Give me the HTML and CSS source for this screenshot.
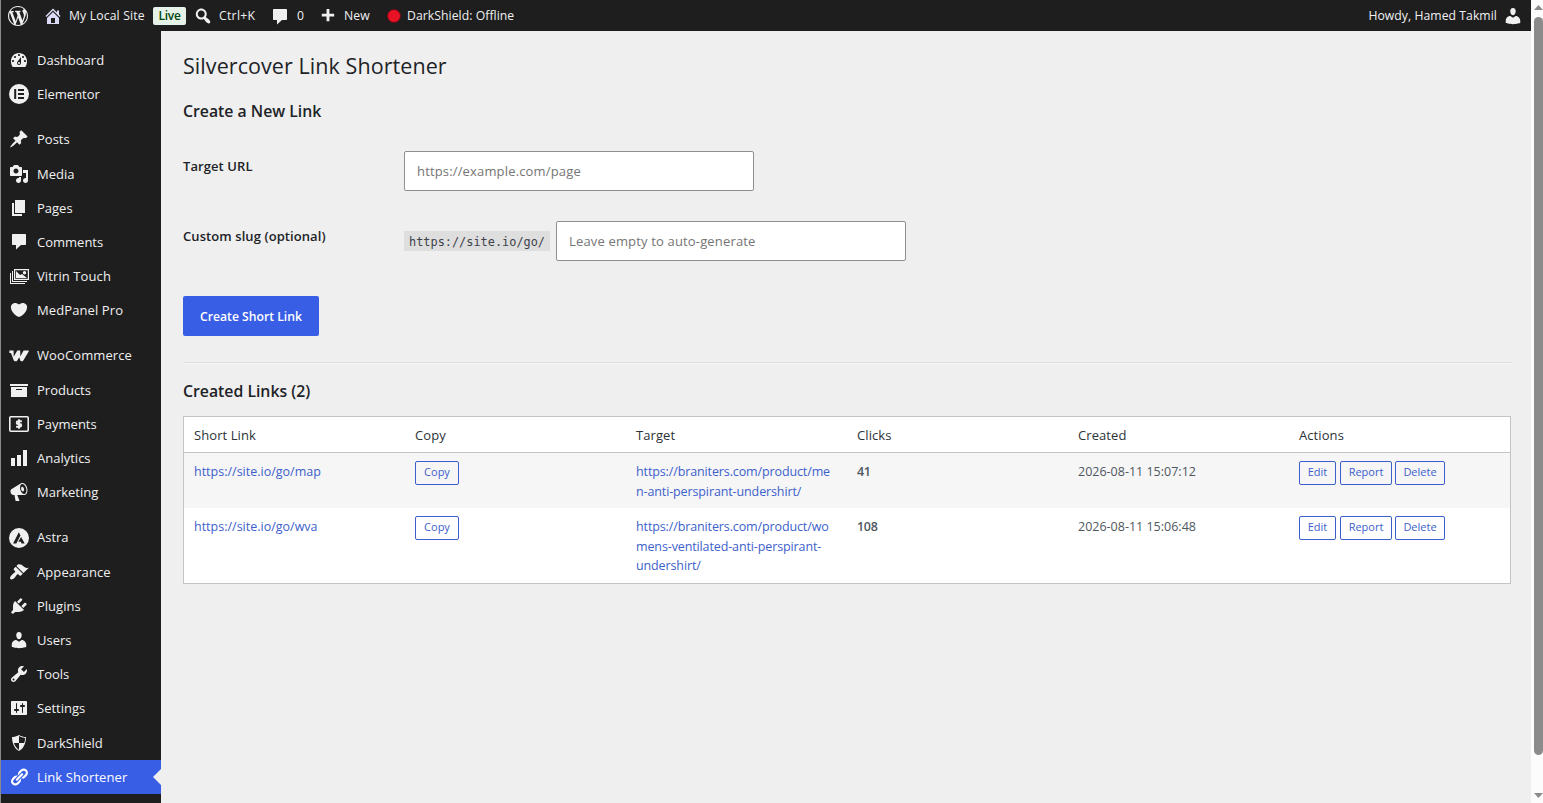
FILE: index.html
```html
<!DOCTYPE html>
<html lang="en">
<head>
<meta charset="utf-8">
<title>Silvercover Link Shortener</title>
<link rel="stylesheet" href="styles.css">
</head>
<body>
<div class="screen">
<div class="admin">
  <header class="adminbar">
    <svg class="icon wp" viewBox="0 0 20 20"><path d="M20 10c0-5.51-4.49-10-10-10C4.48 0 0 4.49 0 10c0 5.52 4.48 10 10 10 5.51 0 10-4.48 10-10zM7.78 15.37L4.37 6.22c.55-.02 1.17-.08 1.17-.08.5-.06.44-1.13-.06-1.11 0 0-1.45.11-2.37.11-.18 0-.37 0-.58-.01C4.12 2.69 6.87 1.11 10 1.11c2.33 0 4.45.87 6.05 2.34-.68-.11-1.65.39-1.65 1.58 0 .74.45 1.36.9 2.1.35.61.55 1.36.55 2.46 0 1.49-1.4 5-1.4 5l-3.03-8.37c.54-.02.82-.17.82-.17.5-.05.44-1.25-.06-1.22 0 0-1.44.12-2.38.12-.87 0-2.33-.12-2.33-.12-.5-.03-.56 1.2-.06 1.22l.92.08 1.26 3.41zM17.41 10c.24-.64.74-1.87.43-4.25.7 1.29 1.05 2.71 1.05 4.25 0 3.29-1.73 6.24-4.4 7.78.97-2.59 1.94-5.2 2.92-7.78zM6.1 18.09C3.12 16.65 1.11 13.53 1.11 10c0-1.3.23-2.48.72-3.59C3.25 10.3 4.67 14.2 6.1 18.09zm4.03-6.63l2.58 6.98c-.86.29-1.76.45-2.71.45-.79 0-1.57-.11-2.29-.33.81-2.38 1.62-4.74 2.42-7.1z"/></svg>
    <a class="bar-item site"><svg class="icon home" viewBox="0 0 20 20"><path d="M16 8.5l1.53 1.53-1.06 1.06L10 4.6l-6.47 6.49-1.06-1.06L10 2.5l4 4v-2h2v4zm-6-2.46l6 5.99V18H4v-5.97zM12 17v-5H8v5h4z"/></svg><span>My Local Site</span></a>
    <span class="live">Live</span>
    <a class="bar-item search"><svg class="icon" viewBox="0 0 20 20"><path d="M12.14 4.18c1.87 1.87 2.11 4.75.72 6.89.12.1.22.21.36.31.2.16.47.36.81.59.34.24.56.39.66.47.42.31.73.57.94.78.32.32.6.65.84 1 .25.35.44.69.59 1.04.14.35.21.68.18 1-.02.32-.14.59-.36.81s-.49.34-.81.36c-.31.02-.65-.04-.99-.19-.35-.14-.7-.34-1.04-.59-.35-.24-.68-.52-1-.84-.21-.21-.47-.52-.77-.93-.1-.13-.25-.35-.47-.66-.22-.32-.4-.57-.56-.78-.16-.2-.29-.35-.44-.5-2.07 1.09-4.69.76-6.44-.98-2.14-2.15-2.14-5.64 0-7.78 2.15-2.15 5.63-2.15 7.78 0zm-1.41 6.36c1.36-1.37 1.36-3.58 0-4.95-1.37-1.37-3.59-1.37-4.95 0-1.37 1.37-1.37 3.58 0 4.95 1.36 1.37 3.58 1.37 4.95 0z"/></svg><span>Ctrl+K</span></a>
    <a class="bar-item comments"><svg class="icon" viewBox="0 0 20 20"><path d="M4 2h12c.6 0 1 .4 1 1v9c0 .6-.4 1-1 1h-4l-5 4.500V13H4c-.6 0-1-.4-1-1V3c0-.6.4-1 1-1z"/></svg><span>0</span></a>
    <a class="bar-item new"><svg class="icon" viewBox="0 0 20 20"><path d="M17 7v3h-5v5H9v-5H4V7h5V2h3v5h5z"/></svg><span>New</span></a>
    <a class="bar-item shield"><i class="dot"></i><span>DarkShield: Offline</span></a>
    <a class="bar-item user"><span>Howdy, Hamed Takmil</span><svg class="icon" viewBox="0 0 20 20"><path d="M10 9.25c-2.27 0-2.73-3.44-2.73-3.44C7 4.02 7.82 2 9.97 2c2.16 0 2.98 2.02 2.71 3.81 0 0-.41 3.44-2.68 3.44zm0 2.57L12.72 10c2.39 0 4.52 2.33 4.52 4.53v2.49s-3.65 1.13-7.24 1.13c-3.65 0-7.24-1.13-7.24-1.13v-2.49c0-2.25 1.94-4.48 4.47-4.48z"/></svg></a>
  </header>
  <div class="body">
    <nav class="menu">
      <a class="item"><svg class="icon" viewBox="0 0 20 20"><path d="M3.76 17h12.48c1.34-1.63 1.76-3.73 1.76-6 0-4.42-3.58-8-8-8s-8 3.58-8 8c0 2.27.42 4.37 1.76 6zM10 4c.55 0 1 .45 1 1s-.45 1-1 1-1-.45-1-1 .45-1 1-1zM6 6c.55 0 1 .45 1 1s-.45 1-1 1-1-.45-1-1 .45-1 1-1zm8 0c.55 0 1 .45 1 1s-.45 1-1 1-1-.45-1-1 .45-1 1-1zm-5.37 5.55L12 7v6c0 1.1-.9 2-2 2s-2-.9-2-2c0-.57.24-1.08.63-1.45zM4 10c.55 0 1 .45 1 1s-.45 1-1 1-1-.45-1-1 .45-1 1-1zm12 0c.55 0 1 .45 1 1s-.45 1-1 1-1-.45-1-1 .45-1 1-1zm-5 3c0-.55-.45-1-1-1s-1 .45-1 1 .45 1 1 1 1-.45 1-1z"/></svg><span>Dashboard</span></a>
      <a class="item"><svg class="icon" viewBox="0 0 20 20"><path fill-rule="evenodd" d="M10 0a10 10 0 1 0 0 20 10 10 0 0 0 0-20zM5.2 5h2v10h-2zM9 5h6v2H9zm0 4h6v2H9zm0 4h6v2H9z"/></svg><span>Elementor</span></a>
      <div class="sep"></div>
      <a class="item"><svg class="icon" viewBox="0 0 20 20"><path d="M10.44 3.02l1.82-1.82 6.36 6.35-1.83 1.82c-1.05-.68-2.48-.57-3.41.36l-.75.75c-.92.93-1.04 2.35-.35 3.41l-1.83 1.82-2.41-2.41-2.8 2.79c-.42.42-3.38 2.71-3.8 2.29s1.86-3.39 2.28-3.81l2.79-2.79L4.1 9.36l1.83-1.82c1.05.69 2.48.57 3.4-.36l.75-.75c.93-.92 1.05-2.35.36-3.41z"/></svg><span>Posts</span></a>
      <a class="item"><svg class="icon" viewBox="0 0 20 20"><path d="M13 11V4c0-.55-.45-1-1-1h-1.67L9 1H5L3.67 3H2c-.55 0-1 .45-1 1v7c0 .55.45 1 1 1h10c.55 0 1-.45 1-1zM7 4.5c1.38 0 2.5 1.12 2.5 2.5S8.38 9.5 7 9.5 4.5 8.38 4.5 7 5.62 4.5 7 4.5zM14 6h5v10.5c0 1.38-1.12 2.5-2.5 2.5S14 17.88 14 16.5s1.12-2.5 2.5-2.5c.17 0 .34.02.5.05V9h-3V6zm-4 8.05V13h2v3.5c0 1.38-1.12 2.5-2.5 2.5S7 17.88 7 16.5 8.12 14 9.5 14c.17 0 .34.02.5.05z"/></svg><span>Media</span></a>
      <a class="item"><svg class="icon" viewBox="0 0 20 20"><path d="M6 15V2h10v13H6zm-1 1h8v2H3V5h2v11z"/></svg><span>Pages</span></a>
      <a class="item"><svg class="icon" viewBox="0 0 20 20"><path d="M4 2h12c.6 0 1 .4 1 1v9c0 .6-.4 1-1 1h-4l-5 4.500V13H4c-.6 0-1-.4-1-1V3c0-.6.4-1 1-1z"/></svg><span>Comments</span></a>
      <a class="item"><svg class="icon" viewBox="0 0 20 20"><path fill-rule="evenodd" d="M5 3h15v11H5zm1.200 1.200v8.600h12.600V4.200zM7 12V5l4 4 2-1 5 4zM15.500 5a1.700 1.700 0 1 1 0 3.400 1.700 1.700 0 0 1 0-3.400zM3 5h1v10h14v1H3zM1 7h1v10h14v1H1z"/></svg><span class="wide">Vitrin Touch</span></a>
      <a class="item"><svg class="icon" viewBox="0 0 20 20"><path d="M10 17.12c3.33-1.4 5.74-3.79 7.04-6.21 1.28-2.41 1.46-4.81.32-6.25-1.03-1.29-2.37-1.78-3.73-1.74s-2.68.63-3.63 1.46c-.95-.83-2.27-1.42-3.63-1.46s-2.700.45-3.73 1.74c-1.14 1.44-.96 3.84.34 6.25 1.28 2.42 3.69 4.81 7.02 6.21z"/></svg><span class="wide">MedPanel Pro</span></a>
      <div class="sep"></div>
      <a class="item"><svg class="icon" viewBox="0 0 20 20"><path d="M.4 4.600h4.200L4.700 10.800 8.300 4.600h2.900l.1 5.800L14.600 4.600h4.700c.5 0 .7.500.4.900L14.300 14.400c-.7 1.200-2.700 1.100-3.100-.2L10.300 11.200 8.300 14.400c-.9 1.300-3.200 1.200-3.700-.4L2.200 7.600C1.900 6.900 1.300 7 .4 7z"/></svg><span class="wide">WooCommerce</span></a>
      <a class="item"><svg class="icon" viewBox="0 0 20 20"><path d="M19 4v2H1V4h18zM2 7h16v10H2V7zm11 3V9H7v1h6z"/></svg><span>Products</span></a>
      <a class="item"><svg class="icon" viewBox="0 0 20 20"><rect x=".8" y="2.800" width="18.400" height="14.400" rx="1" fill="none" stroke="currentColor" stroke-width="1.600"/><path fill="none" stroke="currentColor" stroke-width="1.900" d="M12.900 7.300H9.200c-2 0-2 2.700 0 2.700h1.600c2 0 2 2.700 0 2.700H7.100M10 5.300v9.400"/></svg><span>Payments</span></a>
      <a class="item"><svg class="icon" viewBox="0 0 20 20"><path d="M18 18V2h-4v16h4zm-6 0V7H8v11h4zm-6 0v-8H2v8h4z"/></svg><span>Analytics</span></a>
      <a class="item"><svg class="icon" viewBox="0 0 20 20"><path d="M18.15 5.94c.46 1.62.38 3.22-.02 4.48-.42 1.28-1.26 2.18-2.3 2.48-.16.06-.26.06-.4.06-.06.02-.12.02-.18.02-.06.02-.14.02-.22.02h-6.8l2.22 5.500c.02.14-.06.26-.14.34-.08.1-.24.16-.34.16H6.950c-.1 0-.26-.06-.34-.16-.08-.08-.16-.2-.14-.34l-1-5.500H4.250l-.02-.02c-.5.06-1.080-.18-1.540-.62s-.88-1.080-1.060-1.880c-.24-.8-.2-1.560-.02-2.200.18-.62.58-1.080 1.060-1.300l.02-.02 9-5.400c.1-.06.18-.1.24-.16.06-.04.14-.08.24-.12.16-.08.28-.12.5-.18 1.040-.3 2.240.1 3.220.98s1.840 2.240 2.260 3.860zm-2.580 5.980h-.02c.4-.1.74-.34 1.040-.7.58-.7.86-1.760.86-3.040 0-.64-.1-1.300-.28-1.980-.34-1.360-1.020-2.500-1.780-3.240s-1.680-1.100-2.460-.88c-.82.22-1.400.96-1.700 2-.32 1.040-.28 2.360.06 3.720.38 1.360 1 2.500 1.800 3.240.78.74 1.620 1.100 2.480.88zm-2.540-7.080c.22-.04.42-.02.62.04.38.16.76.48 1.020 1s.42 1.200.42 1.780c0 .3-.04.56-.12.8-.18.48-.44.84-.86.94-.34.1-.8-.06-1.140-.4s-.64-.86-.78-1.500c-.18-.62-.12-1.240.02-1.720s.48-.84.82-.94z"/></svg><span>Marketing</span></a>
      <div class="sep"></div>
      <a class="item"><svg class="icon" viewBox="0 0 20 20"><path fill-rule="evenodd" d="M10 0a10 10 0 1 0 0 20 10 10 0 0 0 0-20zM9.800 4.200l1.700 3.300L7.300 15.500H4.100zM12.100 8.900l3.600 6.600h-3.100l-.8-1.700H9.300z"/></svg><span>Astra</span></a>
      <a class="item"><svg class="icon" viewBox="0 0 20 20"><path d="M14.48 11.06L7.41 3.99l1.500-1.500c.5-.56 2.300-.47 3.510.32 1.210.8 1.430 1.280 2.910 2.100 1.180.64 2.450 1.260 4.450.85zm-.71.71L6.700 4.700 4.930 6.470c-.39.39-.39 1.020 0 1.410l1.060 1.060c.39.39.39 1.030 0 1.420-.6.6-1.430 1.110-2.210 1.690-.35.26-.7.53-1.010.84C1.430 14.230.4 16.080 1.400 17.070c.99 1 2.840-.03 4.180-1.360.31-.31.58-.66.85-1.020.57-.78 1.080-1.610 1.690-2.210.39-.39 1.020-.39 1.410 0l1.060 1.060c.39.39 1.020.39 1.410 0z"/></svg><span class="wide">Appearance</span></a>
      <a class="item"><svg class="icon" viewBox="0 0 20 20"><path d="M13.11 4.36L9.87 7.6 8 5.73l3.24-3.24c.35-.34 1.05-.2 1.56.32.52.51.66 1.21.31 1.55zm-8 1.77l.91-1.12 9.01 9.01-1.19.84c-.71.71-2.63 1.16-3.82 1.16H6.14L4.9 17.26c-.59.59-1.54.59-2.12 0-.59-.58-.59-1.53 0-2.12l1.24-1.24v-3.88c0-1.13.4-3.19 1.09-3.89zm7.26 3.97l3.24-3.24c.34-.35 1.04-.21 1.55.31.52.51.66 1.21.31 1.55l-3.24 3.25z"/></svg><span>Plugins</span></a>
      <a class="item"><svg class="icon" viewBox="0 0 20 20"><path d="M10 9.25c-2.27 0-2.73-3.44-2.73-3.44C7 4.02 7.82 2 9.97 2c2.16 0 2.98 2.02 2.71 3.81 0 0-.41 3.44-2.68 3.44zm0 2.57L12.72 10c2.39 0 4.52 2.33 4.52 4.53v2.49s-3.65 1.13-7.24 1.13c-3.65 0-7.24-1.13-7.24-1.13v-2.49c0-2.25 1.94-4.48 4.47-4.48z"/></svg><span>Users</span></a>
      <a class="item"><svg class="icon" viewBox="0 0 20 20"><path d="M16.68 9.77c-1.34 1.34-3.3 1.67-4.95.99l-5.41 6.52c-.99.99-2.59.99-3.58 0s-.99-2.59 0-3.57l6.52-5.42c-.68-1.65-.35-3.61.99-4.95 1.28-1.28 3.12-1.62 4.72-1.06l-2.89 2.89 2.82 2.82 2.86-2.87c.53 1.58.18 3.39-1.08 4.65zM3.81 16.21c.4.39 1.04.39 1.43 0 .4-.4.4-1.04 0-1.43-.39-.4-1.03-.4-1.43 0-.39.39-.39 1.03 0 1.43z"/></svg><span>Tools</span></a>
      <a class="item"><svg class="icon" viewBox="0 0 20 20"><path d="M18 16V4c0-.55-.45-1-1-1H3c-.55 0-1 .45-1 1v12c0 .55.45 1 1 1h14c.55 0 1-.45 1-1zM8 11h1c.55 0 1 .45 1 1s-.45 1-1 1H8v1.5c0 .28-.22.5-.5.5s-.5-.22-.5-.5V13H6c-.55 0-1-.45-1-1s.45-1 1-1h1V5.5c0-.28.22-.5.5-.5s.5.22.5.5V11zm5-2h-1c-.55 0-1-.45-1-1s.45-1 1-1h1V5.5c0-.28.22-.5.5-.5s.5.22.5.5V7h1c.55 0 1 .45 1 1s-.45 1-1 1h-1v5.5c0 .28-.22.5-.5.5s-.5-.22-.5-.5V9z"/></svg><span>Settings</span></a>
      <a class="item"><svg class="icon" viewBox="0 0 20 20"><path d="M10 2s3 2 7 2c0 11-7 14-7 14S3 15 3 4c4 0 7-2 7-2zm0 8h5s1-1 1-5c0 0-5-1-6-2v7H5c1 4 5 7 5 7v-7z"/></svg><span>DarkShield</span></a>
      <a class="item current"><svg class="icon" viewBox="0 0 20 20"><path d="M17.74 2.76c1.68 1.69 1.68 4.41 0 6.1l-1.53 1.52c-1.12 1.12-2.7 1.47-4.14 1.09l2.62-2.61.76-.77.76-.76c.84-.84.84-2.2 0-3.04-.84-.85-2.2-.85-3.04 0l-.77.76-3.38 3.38c-.37-1.44-.02-3.02 1.1-4.14l1.52-1.53c1.69-1.68 4.42-1.68 6.1 0zM8.59 13.43l5.34-5.34c.42-.42.42-1.1 0-1.52-.44-.43-1.13-.39-1.53 0l-5.33 5.34c-.42.42-.42 1.1 0 1.52.44.43 1.13.39 1.52 0zm-.76 2.29l4.14-4.15c.38 1.44.03 3.02-1.09 4.14l-1.52 1.53c-1.69 1.68-4.41 1.68-6.1 0-1.68-1.68-1.68-4.42 0-6.1l1.53-1.52c1.12-1.12 2.7-1.47 4.14-1.1l-4.14 4.15c-.85.84-.85 2.2 0 3.05.84.84 2.2.84 3.04 0z"/></svg><span class="wide">Link Shortener</span></a>
    </nav>
    <main class="content">
      <h1>Silvercover Link Shortener</h1>
      <h2 class="h-create">Create a New Link</h2>
      <form>
        <div class="field"><label>Target URL</label><input type="text" placeholder="https://example.com/page"></div>
        <div class="field"><label>Custom slug (optional)</label><code>https://site.io/go/</code><input type="text" placeholder="Leave empty to auto-generate"></div>
        <button class="primary" type="button">Create Short Link</button>
      </form>
      <hr>
      <h2 class="h-links">Created Links (2)</h2>
      <table>
        <thead><tr><th>Short Link</th><th>Copy</th><th>Target</th><th>Clicks</th><th>Created</th><th>Actions</th></tr></thead>
        <tbody>
          <tr><td><a>https://site.io/go/map</a></td><td class="buttons"><div class="actions"><button type="button" class="b-copy">Copy</button></div></td><td class="target"><a>https://braniters.com/product/me<br>n-anti-perspirant-undershirt/</a></td><td><b>41</b></td><td>2026-08-11 15:07:12</td><td class="buttons"><div class="actions"><button type="button" class="b-edit">Edit</button><button type="button" class="b-report">Report</button><button type="button" class="b-delete">Delete</button></div></td></tr>
          <tr><td><a>https://site.io/go/wva</a></td><td class="buttons"><div class="actions"><button type="button" class="b-copy">Copy</button></div></td><td class="target"><a>https://braniters.com/product/wo<br>mens-ventilated-anti-perspirant-<br>undershirt/</a></td><td><b>108</b></td><td>2026-08-11 15:06:48</td><td class="buttons"><div class="actions"><button type="button" class="b-edit">Edit</button><button type="button" class="b-report">Report</button><button type="button" class="b-delete">Delete</button></div></td></tr>
        </tbody>
      </table>
    </main>
  </div>
</div>
<aside class="scrollbar"><i class="up"></i><i class="thumb"></i><i class="down"></i></aside>
</div>
</body>
</html>
```
FILE: styles.css
```css
* { box-sizing: border-box; }
body { margin: 0; background: #efefef; color: #50575e; font: 12.5px/19.5px "Open Sans", "Noto Sans", sans-serif; overflow: hidden; }
.screen { display: flex; width: 1543px; height: 803px; overflow: hidden; }
.admin { width: 1531px; display: flex; flex-direction: column; border-left: 1px solid #8a8a8a; }
.icon { width: 20px; height: 20px; fill: currentColor; flex: none; display: block; }

.adminbar { height: 31px; flex: none; display: flex; align-items: center; background: #1e1e1e; color: #f0f0f1; padding: 0 8px 0 7px; font-size: 12.2px; white-space: nowrap; }
.bar-item { display: flex; align-items: center; height: 31px; }
.bar-item span { letter-spacing: .06px; }
.wp { margin-right: 15px; }
.home { color: #dcdcf6; }
.site { width: 110px; }
.site span { margin-left: 6px; letter-spacing: .15px; }
.live { width: 33px; height: 18px; line-height: 18px; border-radius: 2px; background: #e6f2e8; color: #00450c; text-align: center; font-size: 12px; font-weight: 600; letter-spacing: -.3px; margin-right: 7px; }
.search { width: 77px; }
.search span { margin-left: 6px; letter-spacing: .3px; }
.comments { width: 49px; }
.comments span { margin-left: 7px; }
.comments .icon { position: relative; top: 1px; }
.new { width: 68px; }
.new .icon { width: 19px; height: 19px; position: relative; top: 1px; left: -1px; }
.new span { margin-left: 6px; }
.dot { width: 14px; height: 14px; border-radius: 50%; background: #e81224; border: 1px solid #6b0a14; margin-right: 6px; }
.user { margin-left: auto; gap: 6px; }

.body { flex: 1; display: flex; min-height: 0; }
.menu { width: 160px; flex: none; background: #1e1e1e; color: #f0f0f1; padding-top: 12px; font-size: 13px; line-height: 18.2px; }
.item { display: flex; align-items: center; height: 34.2px; padding-left: 8px; gap: 8px; }
.item span { white-space: nowrap; }
.item .wide { letter-spacing: .1px; }
.sep { height: 11px; }
.current { background: #385ee6; color: #fff; position: relative; }
.current::after { content: ""; position: absolute; right: 0; top: 9px; border: 8px solid transparent; border-left-width: 0; border-right-color: #efefef; }

.content { flex: 1; padding: 20px 20px 0 22px; }
h1, h2 { color: #1d2327; margin: 0; }
h1 { font-size: 21.5px; line-height: 29px; font-weight: 400; letter-spacing: .07px; }
h2 { font-size: 15.8px; line-height: 22px; font-weight: 600; letter-spacing: 0; }
.h-create { margin-top: 20px; }
form { margin-top: 29px; }
.field { display: flex; align-items: center; height: 40px; margin-bottom: 30px; }
label { width: 221px; color: #1d2327; font-size: 13px; font-weight: 600; padding-bottom: 8px; letter-spacing: .08px; }
input { width: 350px; height: 40px; border: 1px solid #8c8f94; border-radius: 2px; padding: 0 12px; background: #fff; font: 13px "Open Sans", "Noto Sans", sans-serif; letter-spacing: .16px; }
input::placeholder { color: #757575; opacity: 1; }
code { width: 146px; height: 20px; line-height: 22px; margin-right: 6px; padding-left: 5px; background: #dedede; color: #3c434a; font-family: "DejaVu Sans Mono", monospace; font-size: 11.9px; }
button { font-family: "Open Sans", "Noto Sans", sans-serif; white-space: nowrap; }
.primary { display: block; width: 136px; height: 40px; margin-top: 35px; padding: 0; border: 0; border-radius: 2px; background: #385ee6; color: #fff; font-size: 12.2px; font-weight: 600; letter-spacing: 0; }
hr { margin: 26px 0 0; border: 0; border-top: 1px solid #dcdcde; border-bottom: 1px solid #f6f7f7; }
.h-links { margin-top: 16px; }
table { width: 100%; margin-top: 14px; table-layout: fixed; border-collapse: separate; border-spacing: 0; background: #fff; border: 1px solid #c3c4c7; }
th { height: 36px; padding: 2px 10px 0; text-align: left; font-weight: 400; font-size: 13px; color: #2c3338; letter-spacing: .08px; border-bottom: 1px solid #c3c4c7; }
td { padding: 9px 10px 7px; vertical-align: top; white-space: nowrap; }
td a { color: #3d5fcb; }
td b { font-weight: 600; letter-spacing: -.3px; }
.target { letter-spacing: -.12px; }
.buttons { padding-top: 8px; padding-right: 0; }
tbody tr:first-child { background: #f6f6f7; }
.actions { display: flex; height: 24px; }
.actions button { height: 24px; padding: 0 0 2px; border: 1px solid #3d5fcb; border-radius: 2px; background: transparent; color: #3d5fcb; font-size: 11px; line-height: 20px; font-weight: 500; }
.b-copy { width: 44px; }
.b-edit { width: 37px; margin-right: 4px; }
.b-report { width: 52px; margin-right: 3px; }
.b-delete { width: 50px; }

.scrollbar { width: 12px; background: #fcfcfc; display: flex; flex-direction: column; align-items: center; padding-left: 3px; }
.up, .down { width: 9px; height: 5px; background: #8b8b8b; clip-path: polygon(50% 0, 100% 100%, 0 100%); margin-top: 5px; }
.thumb { width: 9px; height: 738px; margin-top: 7px; border-radius: 5px; background: #8b8b8b; }
.down { clip-path: polygon(0 0, 100% 0, 50% 100%); margin-top: 38px; }
```
